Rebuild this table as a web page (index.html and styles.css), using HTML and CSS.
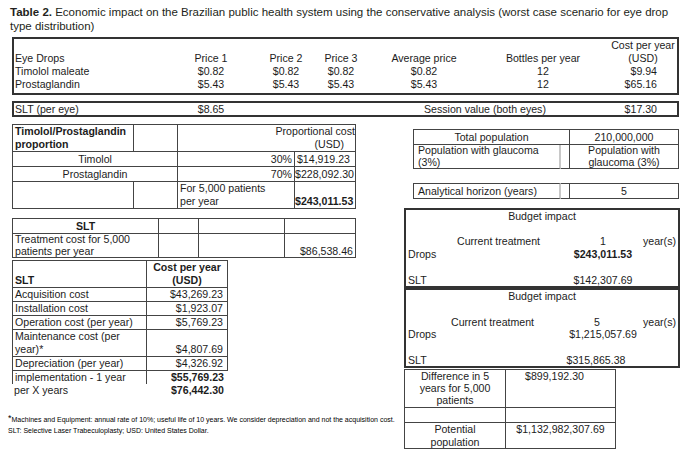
FILE: index.html
```html
<!DOCTYPE html>
<html lang="en">
<head>
<meta charset="utf-8">
<title>Table 2</title>
<link rel="stylesheet" href="styles.css">
</head>
<body>
<div class="page">
  <p class="title"><b>Table 2.</b> <span>Economic impact on the Brazilian public health system using the conservative analysis (worst case scenario for eye drop type distribution)</span></p>

  <table class="box drops">
    <colgroup><col class="d-lbl"><col class="d-p1"><col class="d-p2"><col class="d-p3"><col class="d-avg"><col class="d-bot"><col class="d-cost"></colgroup>
    <tr><td class="lbl">Eye Drops</td><td>Price 1</td><td>Price 2</td><td>Price 3</td><td>Average price</td><td>Bottles per year</td><td class="cost-h">Cost per year<br>(USD)</td></tr>
    <tr><td class="lbl">Timolol maleate</td><td>$0.82</td><td>$0.82</td><td>$0.82</td><td>$0.82</td><td>12</td><td class="cost">$9.94</td></tr>
    <tr class="last"><td class="lbl">Prostaglandin</td><td>$5.43</td><td>$5.43</td><td>$5.43</td><td>$5.43</td><td>12</td><td class="cost">$65.16</td></tr>
  </table>

  <table class="box drops eye">
    <colgroup><col class="d-lbl"><col class="d-p1"><col class="d-p2"><col class="d-p3"><col class="d-avg"><col class="d-bot"><col class="d-cost"></colgroup>
    <tr><td class="lbl">SLT (per eye)</td><td>$8.65</td><td></td><td></td><td colspan="2" class="session">Session value (both eyes)</td><td class="cost">$17.30</td></tr>
  </table>

  <div class="cols">
    <div class="left">
      <table class="grid prop">
        <colgroup><col class="p-c1"><col class="p-c2"><col class="p-c3"><col class="p-c4"></colgroup>
        <tr><td class="b">Timolol/Prostaglandin<br>proportion</td><td></td><td colspan="2" class="r hdr">Proportional cost<br><span class="usd">(USD)</span></td></tr>
        <tr class="mid"><td colspan="2" class="c">Timolol</td><td class="r">30%</td><td class="r v">$14,919.23</td></tr>
        <tr class="mid"><td colspan="2" class="c">Prostaglandin</td><td class="r">70%</td><td class="r v">$228,092.30</td></tr>
        <tr><td></td><td></td><td>For 5,000 patients<br>per year</td><td class="r b bot v">$243,011.53</td></tr>
      </table>

      <table class="grid sltt">
        <colgroup><col class="s-c1"><col class="s-c2"><col class="s-c3"><col class="s-c4"></colgroup>
        <tr class="mid"><td class="c b">SLT</td><td></td><td></td><td></td></tr>
        <tr class="two"><td>Treatment cost for 5,000<br>patients per year</td><td></td><td></td><td class="r bot">$86,538.46</td></tr>
      </table>

      <table class="grid costt">
        <colgroup><col class="k-c1"><col class="k-c2"></colgroup>
        <tr><td class="b bot">SLT</td><td class="c b">Cost per year<br>(USD)</td></tr>
        <tr><td>Acquisition cost</td><td class="r">$43,269.23</td></tr>
        <tr><td>Installation cost</td><td class="r">$1,923.07</td></tr>
        <tr><td>Operation cost (per year)</td><td class="r">$5,769.23</td></tr>
        <tr><td>Maintenance cost (per<br>year)*</td><td class="r bot">$4,807.69</td></tr>
        <tr><td>Depreciation (per year)</td><td class="r">$4,326.92</td></tr>
        <tr class="impl"><td>implementation - 1 year</td><td class="r b">$55,769.23</td></tr>
        <tr class="perx"><td>per X years</td><td class="r b">$76,442.30</td></tr>
      </table>

      <p class="note"><span class="ast">*</span>Machines and Equipment: annual rate of 10%; useful life of 10 years. We consider depreciation and not the acquisition cost.<br>SLT: Selective Laser Trabeculoplasty; USD: United States Dollar.</p>
    </div>

    <div class="right">
      <table class="grid pop">
        <colgroup><col class="q-c1"><col class="q-c2"><col class="q-c3"></colgroup>
        <tr class="mid"><td colspan="2" class="c">Total population</td><td class="c">210,000,000</td></tr>
        <tr class="two"><td class="soft">Population with glaucoma<br>(3%)</td><td></td><td class="c">Population with<br>glaucoma (3%)</td></tr>
      </table>

      <table class="grid pop horizon">
        <colgroup><col class="q-c1"><col class="q-c2"><col class="q-c3"></colgroup>
        <tr class="mid"><td class="soft">Analytical horizon (years)</td><td></td><td class="c">5</td></tr>
      </table>

      <table class="budget">
        <colgroup><col class="u-a"><col class="u-b"><col class="u-c"><col class="u-d"></colgroup>
        <tr><td colspan="4" class="c">Budget impact</td></tr>
        <tr><td colspan="4">&nbsp;</td></tr>
        <tr><td></td><td class="ct">Current treatment</td><td class="val">1</td><td>year(s)</td></tr>
        <tr><td>Drops</td><td></td><td class="val b">$243,011.53</td><td></td></tr>
        <tr><td colspan="4">&nbsp;</td></tr>
        <tr><td>SLT</td><td></td><td class="val">$142,307.69</td><td></td></tr>
      </table>

      <table class="budget second">
        <colgroup><col class="u-a"><col class="u-b"><col class="u-c"><col class="u-d"></colgroup>
        <tr><td colspan="4" class="c">Budget impact</td></tr>
        <tr><td colspan="4">&nbsp;</td></tr>
        <tr><td></td><td class="ct">Current treatment</td><td class="val yr">5</td><td>year(s)</td></tr>
        <tr><td>Drops</td><td></td><td class="val">$1,215,057.69</td><td></td></tr>
        <tr><td colspan="4">&nbsp;</td></tr>
        <tr><td>SLT</td><td></td><td class="val slt">$315,865.38</td><td></td></tr>
      </table>

      <table class="grid diff">
        <colgroup><col class="f-c1"><col class="f-c2"></colgroup>
        <tr class="three"><td class="c">Difference in 5<br>years for 5,000<br>patients</td><td class="c top first">$899,192.30</td></tr>
        <tr class="mid"><td>&nbsp;</td><td></td></tr>
        <tr class="pot"><td class="c">Potential<br>population</td><td class="c top">$1,132,982,307.69</td></tr>
      </table>
    </div>
  </div>
</div>
</body>
</html>
```

FILE: styles.css
```css
* { box-sizing: border-box; }

body {
  margin: 0;
  background: #ffffff;
  color: #1c1c1c;
  font-family: "Liberation Sans", Arial, sans-serif;
  font-size: 10.6px;
}

.page {
  width: 689px;
  padding: 5px 0 0 8px;
}

.title {
  margin: 0 0 4px 2px;
  width: 669px;
  font-size: 11.5px;
  line-height: 14px;
  color: #231f20;
}

table {
  border-collapse: separate;
  border-spacing: 0;
  table-layout: fixed;
}

td {
  padding: 0 2px;
  line-height: 13px;
  white-space: nowrap;
  overflow: visible;
  vertical-align: middle;
}

.b { font-weight: bold; }
.c { text-align: center; }
.r { text-align: right; }
.bot { vertical-align: bottom; }
.top { vertical-align: top; }

/* thick boxes */
.box {
  width: 667px;
  margin-left: 4px;
  border: 2px solid #333;
}

.d-lbl { width: 159px; }
.d-p1 { width: 76px; }
.d-p2 { width: 74px; }
.d-p3 { width: 36px; }
.d-avg { width: 130px; }
.d-bot { width: 108px; }
.d-cost { width: 80px; }

.drops td {
  padding: 0;
  text-align: center;
  vertical-align: bottom;
}
.drops td.lbl { text-align: left; padding-left: 1px; }
.drops td.cost { text-align: right; padding-right: 20px; }
.drops td.cost-h { padding-left: 12px; }
.drops tr.last td { padding-bottom: 2px; }

.eye { margin-top: 6px; }
.eye td { line-height: 12px; }
.eye td.session { padding-left: 14px; }

/* two column area */
.cols {
  display: flex;
}
.left { width: 396px; }
.right { width: 276px; }

/* thin bordered grids */
.grid td {
  border-right: 1px solid #444;
  border-bottom: 1px solid #444;
}
.grid td:first-child { border-left: 1px solid #444; }
.grid tr:first-child td { border-top: 1px solid #444; }
.grid tr.mid td { padding-top: 1px; }
.grid tr.two td { line-height: 11.5px; }

.prop {
  width: 344px;
  margin: 7px 0 0 4px;
}
.p-c1 { width: 122px; }
.p-c2 { width: 44px; }
.p-c3 { width: 117px; }
.p-c4 { width: 61px; }
.prop td.hdr { padding-right: 0; }
.prop .usd { margin-right: 11px; }
.prop td.v { padding: 0 5px 0 0; }

.sltt {
  width: 344px;
  margin: 9px 0 0 4px;
}
.s-c1 { width: 147px; }
.s-c2 { width: 40px; }
.s-c3 { width: 86px; }
.s-c4 { width: 71px; }

.costt {
  width: 216px;
  margin: 2px 0 0 4px;
}
.k-c1 { width: 135px; }
.k-c2 { width: 81px; }
.costt td.r { padding-right: 4px; }
.costt tr.impl td { border-bottom: none; }
.costt tr.impl td:last-child { border-right: none; }
.costt tr.perx td { border: none; }

.note {
  margin: 16px 0 0 0;
  font-size: 7px;
  line-height: 10.5px;
  white-space: nowrap;
  color: #000;
}
.ast {
  font-size: 9px;
  vertical-align: 1px;
}

.pop {
  width: 266px;
  margin: 12px 0 0 9px;
}
.q-c1 { width: 148px; }
.q-c2 { width: 9px; }
.q-c3 { width: 109px; }
.pop td.soft {
  border-right: 2px solid #c8c8c8;
  padding-left: 4px;
}
.horizon { margin-top: 14px; }

.budget {
  width: 276px;
  margin-top: 9px;
  border: 2px solid #333;
}
.budget td { line-height: 12.7px; }
.budget.second { margin-top: 0; }
.u-a { width: 50px; }
.u-b { width: 93px; }
.u-c { width: 94px; }
.u-d { width: 35px; }
.budget td.val {
  text-align: center;
  padding: 0 0 0 14px;
}
.budget td:nth-child(4) { padding-left: 0; }
.budget td.c { padding: 0; }
.budget td.ct { padding-left: 1px; }
.budget.second td.ct { padding-left: 0; text-indent: -5px; }
.budget td.yr { padding-left: 2px; }
.budget td.slt { padding-left: 0; }

.diff {
  width: 212px;
  margin-top: 1px;
}
.f-c1 { width: 102px; }
.f-c2 { width: 110px; }
.diff tr.three td { line-height: 12px; padding-bottom: 1px; }
.diff tr.pot td { line-height: 12.5px; }
.diff td.first { padding-right: 14px; }
```
